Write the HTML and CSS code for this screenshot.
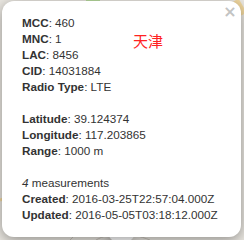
FILE: index.html
```html
<!DOCTYPE html>
<html>
<head>
<meta charset="utf-8">
<link rel="stylesheet" href="styles.css">
</head>
<body>
<div class="map">
  <svg class="roads" width="244" height="240" viewBox="0 0 244 240">
    <path d="M236 0 L244 14" stroke="#f3d9a0" stroke-width="6" fill="none"/>
    <path d="M86 0 L100 0" stroke="#b9dc9f" stroke-width="4" fill="none"/>
    <path d="M0 200 L12 196" stroke="#f3d9a0" stroke-width="3" fill="none"/>
    <path d="M70 240 L82 228" stroke="#c9c4bb" stroke-width="1" fill="none"/>
    <path d="M96 240 C110 232 130 232 150 240" stroke="#c9c4bb" stroke-width="1" fill="none"/>
  </svg>
  <div class="popup">
    <div class="wrapper">
      <div class="content">
        <div><b>MCC</b>: 460</div>
        <div><b>MNC</b>: 1</div>
        <div><b>LAC</b>: 8456</div>
        <div><b>CID</b>: 14031884</div>
        <div><b>Radio Type</b>: LTE</div>
        <div class="blank"></div>
        <div><b>Latitude</b>: 39.124374</div>
        <div><b>Longitude</b>: 117.203865</div>
        <div><b>Range</b>: 1000 m</div>
        <div class="blank"></div>
        <div><i>4</i> measurements</div>
        <div><b>Created</b>: 2016-03-25T22:57:04.000Z</div>
        <div><b>Updated</b>: 2016-05-05T03:18:12.000Z</div>
      </div>
    </div>
    <div class="tip"></div>
    <a class="close">×</a>
  </div>
  <div class="label">天津</div>
</div>
</body>
</html>
```
FILE: styles.css
```css
html, body {
  margin: 0;
  padding: 0;
}
body {
  width: 244px;
  height: 240px;
  overflow: hidden;
  background: #ebe8e2;
}
.map {
  position: relative;
  width: 244px;
  height: 240px;
  overflow: hidden;
}
.roads {
  position: absolute;
  left: 0;
  top: 0;
}
.popup {
  position: absolute;
  left: 2px;
  top: 1px;
  width: 239px;
}
.wrapper {
  position: relative;
  z-index: 2;
  background: #fff;
  border-radius: 12px;
  padding: 1px;
  box-shadow: 0 3px 14px rgba(0, 0, 0, 0.4);
}
.content {
  margin: 13px 18px 13px 19px;
  font-family: "Liberation Sans", Arial, sans-serif;
  font-size: 11.7px;
  line-height: 16px;
  color: #333;
}
.content b {
  font-weight: bold;
}
.blank {
  height: 16px;
}
.tip {
  position: absolute;
  left: 111px;
  bottom: -9px;
  width: 17px;
  height: 17px;
  background: #fff;
  transform: rotate(45deg);
  box-shadow: 0 3px 14px rgba(0, 0, 0, 0.4);
  z-index: 1;
}
.close {
  position: absolute;
  z-index: 3;
  top: 0;
  right: 0;
  padding: 4px 2px 0 0;
  width: 18px;
  height: 14px;
  font: bold 16px/14px Tahoma, "DejaVu Sans", Verdana, sans-serif;
  color: #c3c3c3;
  text-align: center;
}
.label {
  position: absolute;
  z-index: 4;
  left: 133px;
  top: 32px;
  font-family: "Noto Sans CJK SC", sans-serif;
  font-size: 15px;
  line-height: 18px;
  color: #f22;
}
```
